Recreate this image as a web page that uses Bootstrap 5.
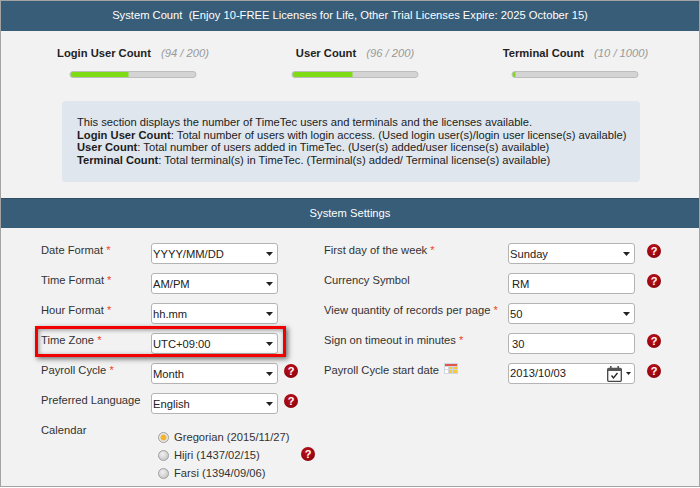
<!DOCTYPE html>
<html lang="en">
<head>
<meta charset="utf-8">
<title>System Settings</title>
<link href="https://cdn.jsdelivr.net/npm/bootstrap@5.3.0/dist/css/bootstrap.min.css" rel="stylesheet">
<style>
html,body{margin:0;background:#fff}
body{font-family:"Liberation Sans",Arial,sans-serif;font-size:11.2px;color:#333;width:700px;height:488px;overflow:hidden}
.app-frame{height:487px;border:1px solid #a3a3a3;background:#f2f2f2;overflow:hidden;position:relative}
.band{background:#385d78;color:#fff;text-align:center;line-height:14px}
.band-a{height:30px;padding-top:7px}
.band-b{height:30px;padding-top:7px;margin-top:16px;border-top:1px solid #2f4f66}
.meters{display:grid;grid-template-columns:222px 222px 219px;padding:15px 0 0 21px}
.meter-title{line-height:14px;text-align:center;white-space:nowrap;color:#222;font-weight:700}
.meter-title em{font-weight:400;color:#999;margin-left:7px}
.meter-bar{width:127px;height:7px;margin:11px auto 0;border:1px solid #bdbdbd;border-radius:4px;background:#d4d4d4;transform:translateX(-.5px)}
.meter-bar .progress-bar{background:#7edb14}
.note-box{margin:23px 0 0 61px;width:578px;height:81px;padding:15px 15px 0;background:#dfe6ee;border-radius:4px;line-height:12.6px;color:#1c1c1c;white-space:nowrap}
.note-box b{font-weight:700}
.form-area{padding:15px 0 0 40px;position:relative}
.fcol-a{width:283px}
.fcol-b{width:350px}
.frow{height:30px;display:flex;align-items:flex-start}
.flabel-a{width:110px;flex:none;line-height:14px}
.flabel-b{width:184px;flex:none;line-height:14px;white-space:nowrap}
.req{color:#f04a2a}
.fcontrol{width:127px;height:21px;flex:none;padding:1px 3px 0 1px;font-size:11.2px;line-height:17px;color:#222;border:1px solid #b4b4b4;border-radius:3px;background-color:#fff;box-shadow:none}
select.fcontrol{background-image:url("data:image/svg+xml,%3Csvg xmlns='http://www.w3.org/2000/svg' width='7' height='4'%3E%3Cpath d='M0 0h7L3.5 4z' fill='%23222'/%3E%3C/svg%3E");background-position:right 4px center;background-size:7px 4px;padding-right:14px}
.fcontrol.form-control{padding-left:3px;min-height:0}
.date-ctl{display:flex;align-items:center;justify-content:space-between;padding:0 3px 0 1px}
.hlp{width:14px;height:14px;flex:none;border-radius:50%;background:radial-gradient(circle at 45% 35%,#c2101c,#7c0008);color:#fff;font-weight:700;font-size:11px;line-height:14px;text-align:center;display:block}
.hlp-a{margin:1px 0 0 6px}
.hlp-b{margin:1px 0 0 12px}
.time-zone-mark{position:absolute;left:34px;top:98px;width:251px;height:31px;border:3px solid #f20000;box-shadow:2px 2px 5px rgba(0,0,0,.55),inset 1px 1px 4px rgba(0,0,0,.4);pointer-events:none}
.cal-row{display:flex;align-items:flex-start}
.cal-label{width:117px;flex:none;line-height:14px}
.cal-list{padding-top:5px;width:136px;flex:none}
.cal-opt{display:flex;align-items:center;height:18px;white-space:nowrap}
.cal-dot{width:11px;height:11px;border-radius:50%;border:1px solid #9f9f9f;background:radial-gradient(circle at 40% 35%,#f0f0f0,#bdbdbd);margin:0 5px 0 0;flex:none;padding:0;appearance:none}
.cal-dot:checked{background:radial-gradient(circle,#f5b32a 0 2.5px,#e6e6e6 3.4px)}
.cal-help{margin:24px 0 0 7px}
.tiny-cal{vertical-align:top;margin-left:2px}
</style>
</head>
<body>
<div class="app-frame">
  <div class="band band-a">System Count&nbsp; (Enjoy 10-FREE Licenses for Life, Other Trial Licenses Expire: 2025 October 15)</div>

  <div class="meters">
    <div>
      <div class="meter-title">Login User Count <em>(94 / 200)</em></div>
      <div class="progress meter-bar"><div class="progress-bar" style="width:47%"></div></div>
    </div>
    <div>
      <div class="meter-title">User Count <em>(96 / 200)</em></div>
      <div class="progress meter-bar"><div class="progress-bar" style="width:48%"></div></div>
    </div>
    <div>
      <div class="meter-title">Terminal Count <em>(10 / 1000)</em></div>
      <div class="progress meter-bar"><div class="progress-bar" style="width:2.4%"></div></div>
    </div>
  </div>

  <div class="note-box">
    This section displays the number of TimeTec users and terminals and the licenses available.<br>
    <b>Login User Count</b>: Total number of users with login access. (Used login user(s)/login user license(s) available)<br>
    <b>User Count</b>: Total number of users added in TimeTec. (User(s) added/user license(s) available)<br>
    <b>Terminal Count</b>: Total terminal(s) in TimeTec. (Terminal(s) added/ Terminal license(s) available)
  </div>

  <div class="band band-b">System Settings</div>

  <div class="form-area d-flex">
    <div class="fcol-a">
      <div class="frow"><div class="flabel-a">Date Format <span class="req">*</span></div><select class="form-select fcontrol"><option>YYYY/MM/DD</option></select></div>
      <div class="frow"><div class="flabel-a">Time Format <span class="req">*</span></div><select class="form-select fcontrol"><option>AM/PM</option></select></div>
      <div class="frow"><div class="flabel-a">Hour Format <span class="req">*</span></div><select class="form-select fcontrol"><option>hh.mm</option></select></div>
      <div class="frow"><div class="flabel-a">Time Zone <span class="req">*</span></div><select class="form-select fcontrol"><option>UTC+09:00</option></select></div>
      <div class="frow"><div class="flabel-a">Payroll Cycle <span class="req">*</span></div><select class="form-select fcontrol"><option>Month</option></select><span class="hlp hlp-a">?</span></div>
      <div class="frow"><div class="flabel-a">Preferred Language</div><select class="form-select fcontrol"><option>English</option></select><span class="hlp hlp-a">?</span></div>
      <div class="cal-row">
        <div class="cal-label">Calendar</div>
        <div class="cal-list">
          <label class="cal-opt"><input type="radio" name="cal" class="cal-dot" checked>Gregorian (2015/11/27)</label>
          <label class="cal-opt"><input type="radio" name="cal" class="cal-dot">Hijri (1437/02/15)</label>
          <label class="cal-opt"><input type="radio" name="cal" class="cal-dot">Farsi (1394/09/06)</label>
        </div>
        <span class="hlp cal-help">?</span>
      </div>
    </div>
    <div class="fcol-b">
      <div class="frow"><div class="flabel-b">First day of the week <span class="req">*</span></div><select class="form-select fcontrol"><option>Sunday</option></select><span class="hlp hlp-b">?</span></div>
      <div class="frow"><div class="flabel-b">Currency Symbol</div><input class="form-control fcontrol" value="RM"><span class="hlp hlp-b">?</span></div>
      <div class="frow"><div class="flabel-b">View quantity of records per page <span class="req">*</span></div><select class="form-select fcontrol"><option>50</option></select></div>
      <div class="frow"><div class="flabel-b">Sign on timeout in minutes <span class="req">*</span></div><input class="form-control fcontrol" value="30"><span class="hlp hlp-b">?</span></div>
      <div class="frow"><div class="flabel-b">Payroll Cycle start date
        <svg width="14" height="11" viewBox="0 0 14 11" class="tiny-cal"><rect width="14" height="11" fill="#cfd6e2"/><rect x="1" y="1" width="12" height="2" fill="#e2574c"/><rect x="1" y="4" width="3" height="2" fill="#fff"/><rect x="5" y="4" width="3" height="2" fill="#f6c93a"/><rect x="9" y="4" width="4" height="2" fill="#f6c93a"/><rect x="1" y="7" width="3" height="3" fill="#fff"/><rect x="5" y="7" width="3" height="3" fill="#f6c93a"/><rect x="9" y="7" width="4" height="3" fill="#f6c93a"/></svg>
      </div>
      <div class="fcontrol date-ctl"><span>2013/10/03</span>
        <span class="d-flex align-items-center">
          <svg width="15" height="16" viewBox="0 0 15 16"><rect x=".7" y="2.500" width="13.600" height="12.800" rx="1" fill="#fff" stroke="#444" stroke-width="1.300"/><rect x="1" y="2" width="13" height="3" fill="#555"/><path d="M3 0h1.600v3H3zM10.400 0H12v3h-1.600z" fill="#555"/><path d="M4.500 9.500l2 2.500 4-5" fill="none" stroke="#222" stroke-width="1.300"/></svg>
          <svg width="5" height="3" viewBox="0 0 7 4" class="ms-1"><path d="M0 0h7L3.500 4z" fill="#222"/></svg>
        </span>
      </div><span class="hlp hlp-b">?</span></div>
    </div>
    <div class="time-zone-mark"></div>
  </div>
</div>
<script src="https://cdn.jsdelivr.net/npm/bootstrap@5.3.0/dist/js/bootstrap.bundle.min.js"></script>
</body>
</html>
